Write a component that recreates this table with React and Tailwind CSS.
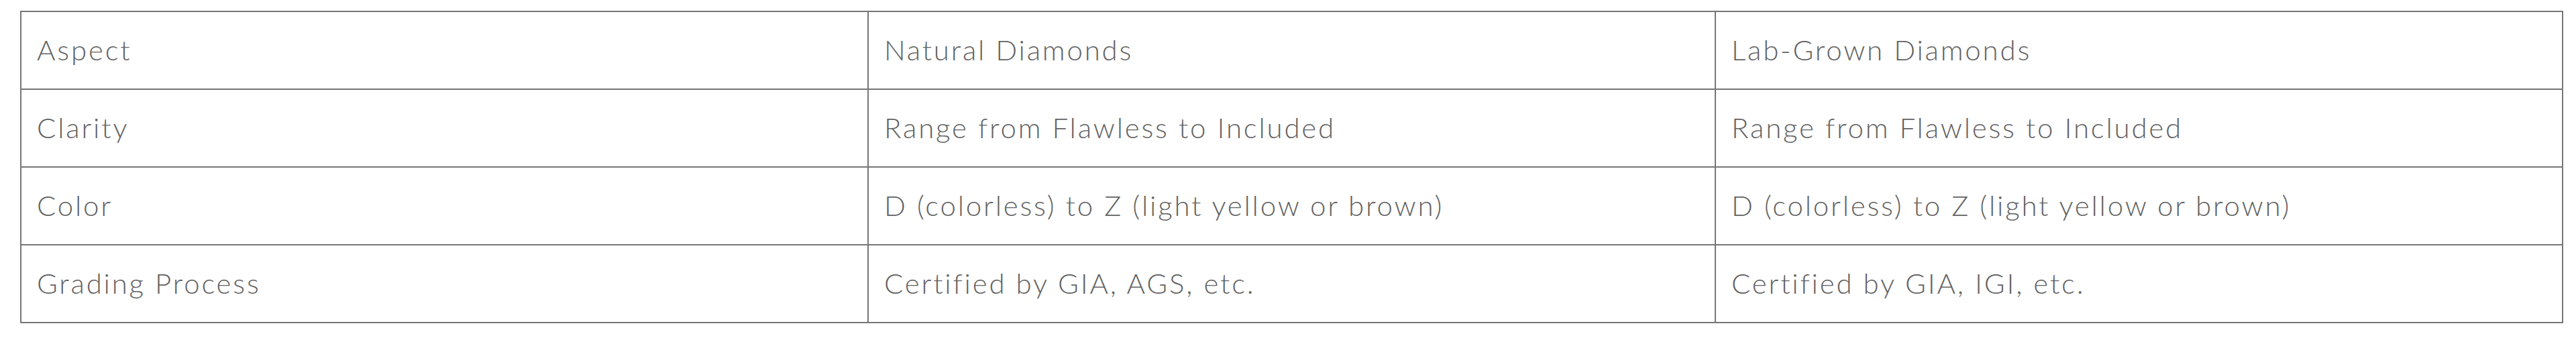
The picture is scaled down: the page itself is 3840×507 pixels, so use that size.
import React from "react";

const rows = [
  ["Aspect", "Natural Diamonds", "Lab-Grown Diamonds"],
  ["Clarity", "Range from Flawless to Included", "Range from Flawless to Included"],
  ["Color", "D (colorless) to Z (light yellow or brown)", "D (colorless) to Z (light yellow or brown)"],
  ["Grading Process", "Certified by GIA, AGS, etc.", "Certified by GIA, IGI, etc."],
];

export default function App() {
  return (
    <div className="min-h-[507px] bg-white pt-[16px] pl-[30px] font-['Lato',sans-serif]">
      <table className="table-fixed w-[3791px] border-collapse border-2 border-[#767676]">
        <tbody>
          {rows.map((row, i) => (
            <tr key={i} className="h-[116px]">
              {row.map((cell, j) => (
                <td
                  key={j}
                  className="w-1/3 border-2 border-[#767676] px-[23px] pb-[2px] align-middle text-[42px] font-light tracking-[2.8px] text-[#626262]"
                >
                  {cell}
                </td>
              ))}
            </tr>
          ))}
        </tbody>
      </table>
    </div>
  );
}
